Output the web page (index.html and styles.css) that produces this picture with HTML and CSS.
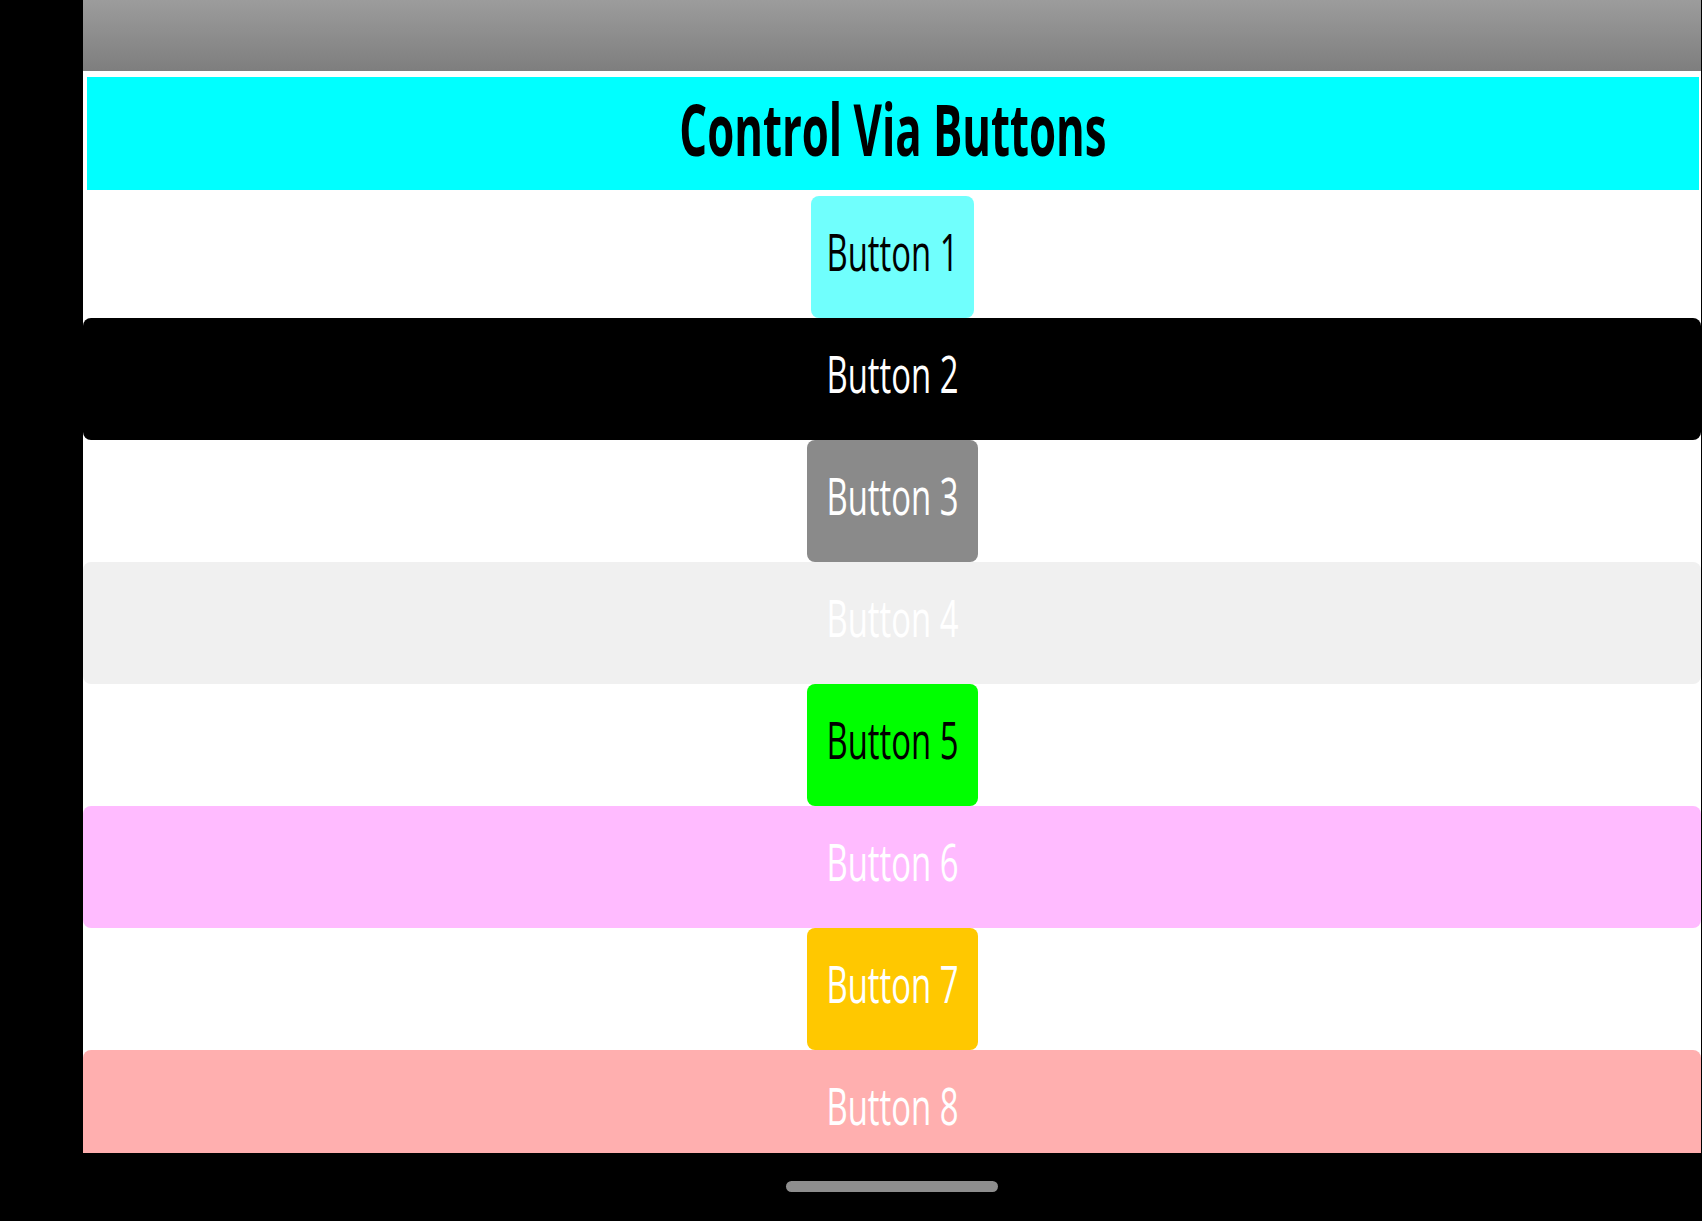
FILE: index.html
```html
<!DOCTYPE html>
<html>
<head>
<meta charset="utf-8">
<link rel="stylesheet" href="styles.css">
</head>
<body>
<div class="screen">
  <div class="side"></div>
  <div class="app">
    <div class="topbar"></div>
    <div class="content">
      <div class="header"><h1 class="title"><span class="sq tsq">Control Via Buttons</span></h1></div>
      <div class="list">
        <div class="btn narrow b1"><span class="sq">Button 1</span></div>
        <div class="btn wide b2"><span class="sq">Button 2</span></div>
        <div class="btn narrow b3"><span class="sq">Button 3</span></div>
        <div class="btn wide b4"><span class="sq">Button 4</span></div>
        <div class="btn narrow b5"><span class="sq">Button 5</span></div>
        <div class="btn wide b6"><span class="sq">Button 6</span></div>
        <div class="btn narrow b7"><span class="sq">Button 7</span></div>
        <div class="btn wide b8"><span class="sq">Button 8</span></div>
      </div>
    </div>
    <div class="bottombar"><div class="home"></div></div>
  </div>
  <div class="edge"></div>
</div>
</body>
</html>
```
FILE: styles.css
```css
html, body {
  margin: 0;
  padding: 0;
  background: #000;
}
.screen {
  display: flex;
  width: 1702px;
  height: 1221px;
  overflow: hidden;
}
.side {
  width: 83px;
  flex: none;
  background: #000;
}
.edge {
  width: 1px;
  flex: none;
  background: #000;
}
.app {
  flex: 1;
  display: flex;
  flex-direction: column;
  min-width: 0;
}
.topbar {
  height: 71px;
  flex: none;
  background: linear-gradient(#9c9c9c, #7e7e7e);
}
.content {
  height: 1082px;
  flex: none;
  background: #fff;
  overflow: hidden;
  padding-top: 6px;
  box-sizing: border-box;
}
.header {
  height: 113px;
  margin: 0 2px 0 4px;
  background: #00ffff;
  display: flex;
  align-items: center;
  justify-content: center;
}
.title {
  margin: 0;
  font-family: "Open Sans", "Liberation Sans", sans-serif;
  font-weight: 700;
  font-size: 72px;
  line-height: 1;
  color: #000;
  padding-bottom: 12px;
  white-space: nowrap;
}
.sq {
  display: inline-block;
  white-space: nowrap;
  flex: none;
  transform: scaleX(0.632);
}
.tsq {
  transform: scaleX(0.607);
}
.list {
  margin-top: 6px;
  display: flex;
  flex-direction: column;
  align-items: center;
}
.btn {
  height: 122px;
  box-sizing: border-box;
  border-radius: 8px;
  display: flex;
  align-items: center;
  justify-content: center;
  font-family: "Open Sans", "Liberation Sans", sans-serif;
  font-size: 52px;
  line-height: 1;
  color: #fff;
  padding-bottom: 12px;
  overflow: visible;
}
.narrow {
  width: 171px;
}
.wide {
  align-self: stretch;
}
.b1 { background: #70fffd; color: #000; width: 163px; }
.b2 { background: #000; }
.b3 { background: #8a8a8a; }
.b4 { background: #f0f0f0; }
.b5 { background: #00ff00; color: #000; }
.b6 { background: #ffbbff; }
.b7 { background: #ffc800; }
.b8 { background: #ffafaf; }
.bottombar {
  flex: 1;
  background: #000;
  display: flex;
  justify-content: center;
  padding-top: 28px;
}
.home {
  width: 212px;
  height: 11px;
  border-radius: 6px;
  background: #8e8e8e;
}
```
